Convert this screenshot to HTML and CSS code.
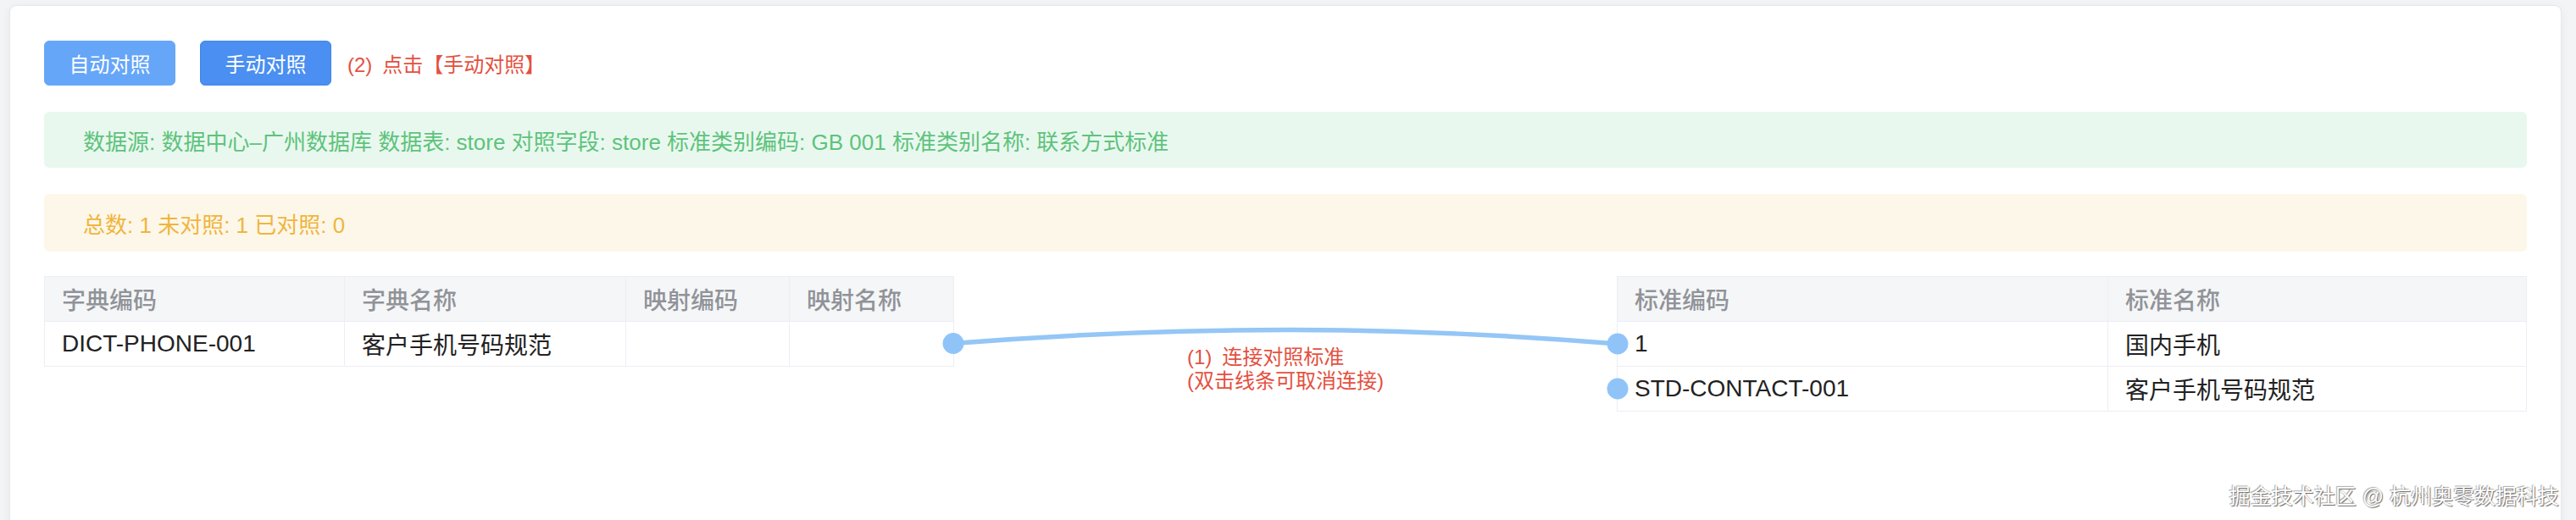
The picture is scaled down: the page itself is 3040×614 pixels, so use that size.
FILE: index.html
```html
<!DOCTYPE html>
<html lang="zh-CN">
<head>
<meta charset="utf-8">
<title>手动对照</title>
<link rel="stylesheet" href="styles.css">
</head>
<body>
<div class="card">
  <div class="toolbar">
    <button class="btn btn-auto">自动对照</button>
    <button class="btn btn-manual">手动对照</button>
    <span class="hint"><span class="num">(2)</span>点击【手动对照】</span>
  </div>
  <div class="alert alert-success">数据源: 数据中心–广州数据库 数据表: store 对照字段: store 标准类别编码: GB 001 标准类别名称: 联系方式标准</div>
  <div class="alert alert-warning">总数: 1 未对照: 1 已对照: 0</div>
  <div class="mapping">
    <table class="tbl tbl-left">
      <colgroup>
        <col class="c-code"><col class="c-name"><col class="c-mcode"><col class="c-mname">
      </colgroup>
      <thead>
        <tr><th>字典编码</th><th>字典名称</th><th>映射编码</th><th>映射名称</th></tr>
      </thead>
      <tbody>
        <tr><td>DICT-PHONE-001</td><td>客户手机号码规范</td><td></td><td></td></tr>
      </tbody>
    </table>
    <div class="middle">
      <div class="note"><span class="num">(1)</span>连接对照标准<br>(双击线条可取消连接)</div>
    </div>
    <table class="tbl tbl-right">
      <colgroup>
        <col class="c-scode"><col class="c-sname">
      </colgroup>
      <thead>
        <tr><th>标准编码</th><th>标准名称</th></tr>
      </thead>
      <tbody>
        <tr><td>1</td><td>国内手机</td></tr>
        <tr><td>STD-CONTACT-001</td><td>客户手机号码规范</td></tr>
      </tbody>
    </table>
    <svg class="links" width="1857" height="170" viewBox="0 0 1857 170">
      <path d="M1073 79.5 C 1348 58, 1588 58, 1857 80" fill="none" stroke="#94c6f6" stroke-width="5.5"/>
      <circle cx="1073" cy="79.5" r="12.5" fill="#90c4f8"/>
      <circle cx="1857" cy="80" r="12.5" fill="#90c4f8"/>
      <circle cx="1857" cy="133" r="12.5" fill="#90c4f8"/>
    </svg>
  </div>
</div>
<div class="watermark">掘金技术社区 @ 杭州奥零数据科技</div>
</body>
</html>
```

FILE: styles.css
```css
html, body {
  margin: 0;
  padding: 0;
}
body {
  background: #f3f4f6;
  font-family: "Liberation Sans", "Noto Sans CJK SC", sans-serif;
  position: relative;
  height: 614px;
  overflow: hidden;
}
.card {
  margin: 6px 17px 0 11px;
  background: #fff;
  border: 1px solid #e6e8ec;
  border-radius: 8px;
  box-shadow: 0 2px 12px rgba(0, 0, 0, 0.05);
  padding: 41px 40px 0 40px;
  height: 700px;
}
.toolbar {
  display: flex;
  align-items: center;
  height: 53px;
}
.btn {
  width: 155px;
  height: 53px;
  border-radius: 6px;
  font-family: inherit;
  font-size: 24px;
  color: #fff;
  padding: 0;
  margin: 0 29px 0 0;
  cursor: pointer;
}
.btn-auto {
  background: #66a6f8;
  border: 1px solid #66a6f8;
}
.btn-manual {
  background: #4a8ff1;
  border: 1px solid #3f86ea;
  margin-right: 19px;
}
.hint {
  color: #e4503f;
  font-size: 24px;
}
.num {
  margin-right: 12px;
}
.alert {
  border-radius: 6px;
  font-size: 26px;
  padding-left: 46px;
  display: flex;
  align-items: center;
}
.alert-success {
  margin-top: 31px;
  height: 66px;
  background: #e9f8ef;
  color: #5ec37c;
}
.alert-warning {
  margin-top: 31px;
  height: 68px;
  background: #fdf7e9;
  color: #f0b53d;
}
.mapping {
  margin-top: 29px;
  display: flex;
  align-items: flex-start;
  position: relative;
}
.tbl {
  border-collapse: collapse;
  table-layout: fixed;
  font-size: 28px;
  width: 1073px;
  border: 1px solid #ebeef5;
}
.tbl th, .tbl td {
  height: 52px;
  padding: 0 0 0 20px;
  text-align: left;
  border: 1px solid #ebeef5;
  white-space: nowrap;
  overflow: hidden;
}
.tbl th {
  background: #f5f6f7;
  color: #909399;
  font-weight: 500;
}
.tbl td {
  color: #222;
}
.c-code { width: 354px; }
.c-name { width: 332px; }
.c-mcode { width: 193px; }
.c-mname { width: 194px; }
.c-scode { width: 579px; }
.c-sname { width: 494px; }
.middle {
  flex: 1;
  display: flex;
  justify-content: center;
  padding-top: 82px;
}
.note {
  color: #e4503f;
  font-size: 24px;
  line-height: 28px;
  text-align: left;
}
.links {
  position: absolute;
  left: 0;
  top: 0;
  overflow: visible;
  pointer-events: none;
}
.watermark {
  position: absolute;
  right: 20px;
  top: 566px;
  font-size: 25px;
  color: #fff;
  text-shadow: 1px 1px 1px #666, -1px -1px 1px #aaa;
}
```
